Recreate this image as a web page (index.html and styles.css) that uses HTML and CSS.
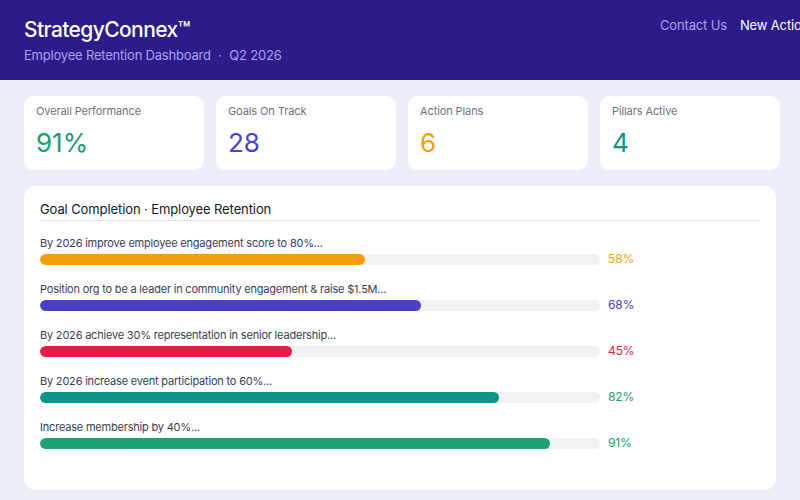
FILE: index.html
```html
<!DOCTYPE html>
<html lang="en">
<head>
<meta charset="utf-8">
<title>StrategyConnex – Employee Retention Dashboard</title>
<link rel="stylesheet" href="styles.css">
</head>
<body>
<header class="topbar">
  <div class="brand">
    <h1 class="brand-name">StrategyConnex™</h1>
    <p class="brand-sub">Employee Retention Dashboard <span class="dot">·</span> Q2 2026</p>
  </div>
  <nav class="nav">
    <a class="nav-link">Contact Us</a>
    <a class="nav-link nav-primary">New Action Plan</a>
  </nav>
</header>

<main class="content">
  <section class="stats">
    <div class="stat">
      <div class="stat-label">Overall Performance</div>
      <div class="stat-value green">91%</div>
    </div>
    <div class="stat">
      <div class="stat-label">Goals On Track</div>
      <div class="stat-value indigo">28</div>
    </div>
    <div class="stat">
      <div class="stat-label">Action Plans</div>
      <div class="stat-value orange">6</div>
    </div>
    <div class="stat">
      <div class="stat-label">Pillars Active</div>
      <div class="stat-value teal">4</div>
    </div>
  </section>

  <section class="panel">
    <h2 class="panel-title">Goal Completion · Employee Retention</h2>
    <div class="goals">
      <div class="goal">
        <div class="goal-label">By 2026 improve employee engagement score to 80%...</div>
        <div class="goal-row">
          <div class="track"><div class="fill bg-orange" style="width:58%"></div></div>
          <span class="pct orange">58%</span>
        </div>
      </div>
      <div class="goal">
        <div class="goal-label">Position org to be a leader in community engagement &amp; raise $1.5M...</div>
        <div class="goal-row">
          <div class="track"><div class="fill bg-indigo" style="width:68%"></div></div>
          <span class="pct indigo">68%</span>
        </div>
      </div>
      <div class="goal">
        <div class="goal-label">By 2026 achieve 30% representation in senior leadership...</div>
        <div class="goal-row">
          <div class="track"><div class="fill bg-red" style="width:45%"></div></div>
          <span class="pct red">45%</span>
        </div>
      </div>
      <div class="goal">
        <div class="goal-label">By 2026 increase event participation to 60%...</div>
        <div class="goal-row">
          <div class="track"><div class="fill bg-teal" style="width:82%"></div></div>
          <span class="pct green">82%</span>
        </div>
      </div>
      <div class="goal">
        <div class="goal-label">Increase membership by 40%...</div>
        <div class="goal-row">
          <div class="track"><div class="fill bg-green" style="width:91%"></div></div>
          <span class="pct green">91%</span>
        </div>
      </div>
    </div>
  </section>
</main>
</body>
</html>
```

FILE: styles.css
```css
* { box-sizing: border-box; }

html, body {
  margin: 0;
  padding: 0;
}

body {
  width: 800px;
  height: 500px;
  overflow: hidden;
  background: #eceffa;
  font-family: Inter, "Noto Sans", "Liberation Sans", sans-serif;
  color: #1f2937;
}

/* ---- top bar ---- */
.topbar {
  display: flex;
  align-items: flex-start;
  height: 80px;
  padding: 16px 0 0 24px;
  background: #2c1b89;
  overflow: hidden;
}

.brand {
  flex: 0 0 636px;
}

.brand-name {
  margin: 0;
  font-size: 21px;
  font-weight: 500;
  line-height: 28px;
  color: #ffffff;
  letter-spacing: -0.6px;
}

.brand-sub {
  margin: 2px 0 0;
  font-size: 13px;
  line-height: 18px;
  color: #a9a2ee;
  letter-spacing: -0.2px;
}

.brand-sub .dot {
  margin: 0 4px;
}

.nav {
  display: flex;
  gap: 13px;
  flex-shrink: 0;
  white-space: nowrap;
}

.nav-link {
  font-size: 13px;
  line-height: 18px;
  color: #a9a2ee;
  letter-spacing: -0.15px;
}

.nav-primary {
  color: #ffffff;
}

/* ---- content ---- */
.content {
  padding: 16px 24px;
}

.stats {
  display: grid;
  grid-template-columns: repeat(4, 180px);
  gap: 12px;
}

.stat {
  height: 74px;
  padding: 8px 12px;
  background: #ffffff;
  border-radius: 10px;
}

.stat-label {
  font-size: 11px;
  line-height: 14px;
  color: #6b7280;
  letter-spacing: -0.1px;
}

.stat-value {
  margin-top: 10px;
  font-size: 26px;
  line-height: 30px;
}

.green { color: #1b9c73; }
.indigo { color: #4a3dc9; }
.orange { color: #f59e0b; }
.teal { color: #0f9488; }
.red { color: #e11d48; }

/* ---- goal panel ---- */
.panel {
  margin-top: 16px;
  width: 752px;
  height: 304px;
  padding: 14px 16px;
  background: #ffffff;
  border-radius: 12px;
}

.panel-title {
  margin: 0;
  padding-bottom: 2px;
  font-size: 13px;
  font-weight: 400;
  line-height: 18px;
  color: #111827;
  letter-spacing: -0.1px;
  border-bottom: 1px solid #e3e4ee;
}

.goals {
  display: flex;
  flex-direction: column;
  gap: 14px;
  margin-top: 14px;
}

.goal-label {
  font-size: 11px;
  line-height: 16px;
  color: #374151;
  letter-spacing: -0.2px;
}

.goal-row {
  display: flex;
  align-items: center;
  gap: 8px;
}

.track {
  width: 560px;
  height: 11px;
  background: #f1f2f4;
  border-radius: 6px;
  overflow: hidden;
}

.fill {
  height: 100%;
  border-radius: 6px;
}

.bg-orange { background: #f59e0b; }
.bg-indigo { background: #4a3dc9; }
.bg-red { background: #e11d48; }
.bg-teal { background: #0d9488; }
.bg-green { background: #1ca075; }

.pct {
  font-size: 12px;
  line-height: 16px;
  letter-spacing: -0.1px;
}
```
